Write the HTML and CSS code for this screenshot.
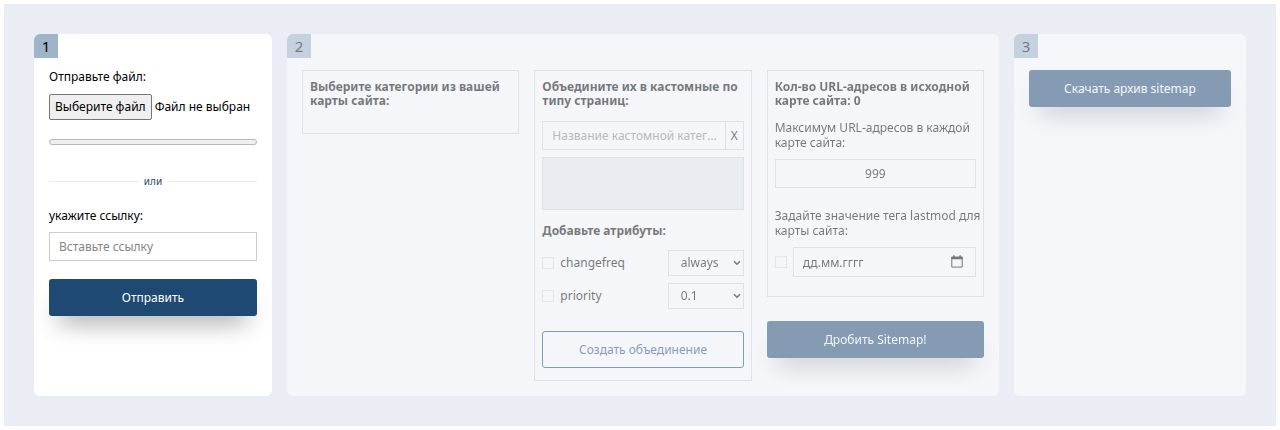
FILE: index.html
```html
<!DOCTYPE html>
<html lang="ru">
  <head>
    <meta charset="UTF-8" />
    <meta name="viewport" content="width=device-width, initial-scale=1.0" />
    <title>Sitemap</title>
    <link rel="stylesheet" href="styles.css">
  </head>
  <body>
    <main class="steps">
      <section class="step">
        <span class="step-number">1</span>
        <form>
          <p class="label">Отправьте файл:</p>
          <div class="file">
            <input class="file-input" type="file" id="file" />
            <label class="file-button" for="file">Выберите файл</label>
            <span>Файл не выбран</span>
          </div>
          <div class="progress" role="progressbar" aria-label="Загрузка файла"></div>
          <div class="or">или</div>
          <label class="label" for="link">укажите ссылку:</label>
          <input class="input" type="text" id="link" placeholder="Вставьте ссылку" />
          <button class="btn" type="button">Отправить</button>
        </form>
      </section>

      <section class="step disabled">
        <span class="step-number">2</span>
        <div class="columns">
          <div class="box box-categories">
            <h2>Выберите категории из вашей карты сайта:</h2>
          </div>

          <div class="box">
            <h2>Объедините их в кастомные по типу страниц:</h2>
            <div class="category">
              <input class="input" type="text" aria-label="Название категории" placeholder="Название кастомной категории" />
              <button class="category-remove" type="button">X</button>
            </div>
            <div class="drop"></div>
            <h2 class="attr-title">Добавьте атрибуты:</h2>
            <div class="attr">
              <input class="check" type="checkbox" id="changefreq" />
              <label for="changefreq">changefreq</label>
              <div class="select">
                <select aria-label="Значение changefreq">
                  <option>always</option>
                  <option>hourly</option>
                  <option>daily</option>
                </select>
                <svg viewBox="0 0 8 6"><path d="M1 1.2l3 3 3-3" /></svg>
              </div>
            </div>
            <div class="attr">
              <input class="check" type="checkbox" id="priority" />
              <label for="priority">priority</label>
              <div class="select">
                <select aria-label="Значение priority">
                  <option>0.1</option>
                  <option>0.2</option>
                  <option>0.3</option>
                </select>
                <svg viewBox="0 0 8 6"><path d="M1 1.2l3 3 3-3" /></svg>
              </div>
            </div>
            <button class="btn btn-outline" type="button">Создать объединение</button>
          </div>

          <div>
            <div class="box box-split">
              <h2>Кол-во URL-адресов в исходной карте сайта: 0</h2>
              <label class="text" for="max">Максимум URL-адресов в каждой карте сайта:</label>
              <input class="input input-center" type="text" id="max" value="999" />
              <label class="text text-date" for="date">Задайте значение тега lastmod для<br />карты сайта:</label>
              <div class="date">
                <input class="check" type="checkbox" aria-label="Добавить lastmod" />
                <div class="date-field">
                  <input class="input" type="text" id="date" placeholder="дд.мм.гггг" />
                  <svg viewBox="0 0 12 13">
                    <path class="line" d="M.8 2.2h10.4v9.9H.8z" />
                    <path d="M.3 1.7h11.4v2.6H.3zM2.2.2h1.4v2H2.2zM8.4.2h1.4v2H8.4z" />
                  </svg>
                </div>
              </div>
            </div>
            <button class="btn" type="button">Дробить Sitemap!</button>
          </div>
        </div>
      </section>

      <section class="step disabled">
        <span class="step-number">3</span>
        <button class="btn btn-first" type="button">Скачать архив sitemap</button>
      </section>
    </main>
  </body>
</html>
```

FILE: styles.css
```css
* {
  box-sizing: border-box;
}
body {
  margin: 4px;
  background-color: #fff;
  color: #000;
  font-family: "Noto Sans", "Open Sans", sans-serif;
  font-size: 12px;
  line-height: 14px;
}
h2,
p {
  margin: 0;
  font-size: 12px;
}
input,
select,
button {
  font: inherit;
  color: inherit;
}

.steps {
  display: grid;
  grid-template-columns: 238fr 712fr 232fr;
  gap: 15px;
  padding: 30px;
  background-color: #eaeef4;
}
.step {
  position: relative;
  min-width: 0;
  padding: 36px 15px 15px;
  background-color: #fff;
  border-radius: 6px;
}
.disabled {
  opacity: 0.5;
}
.step-number {
  position: absolute;
  top: 0;
  left: 0;
  width: 24px;
  height: 24px;
  border-top-left-radius: 6px;
  background-color: #a0b4c9;
  font-size: 15px;
  line-height: 24px;
  text-align: center;
}

.label {
  display: block;
}
.file {
  position: relative;
  display: flex;
  align-items: center;
  gap: 3px;
  margin-top: 10px;
  white-space: nowrap;
}
.file-input {
  position: absolute;
  width: 1px;
  height: 1px;
  opacity: 0;
}
.file-button {
  padding: 5px;
  border: 1px solid #767676;
  border-radius: 2px;
  background-color: #efefef;
}
.progress {
  height: 6px;
  margin-top: 19px;
  border: 1px solid #b8b8b8;
  border-radius: 3px;
  background-color: #efefef;
}
.or {
  display: flex;
  align-items: center;
  gap: 5px;
  margin: 29px 0 21px;
  color: #1e4973;
  font-size: 10px;
}
.or::before,
.or::after {
  content: "";
  flex: 1;
  height: 1px;
  background-color: #eaeef4;
}

.input {
  display: block;
  width: 100%;
  min-width: 0;
  height: 29px;
  padding: 0 9px;
  border: 1px solid #ccc;
  border-radius: 0;
  background-color: transparent;
  text-overflow: ellipsis;
}
.input::placeholder {
  color: #858585;
  opacity: 1;
}
.label + .input {
  margin-top: 9px;
}
.input-center {
  text-align: center;
}

.btn {
  display: block;
  width: 100%;
  height: 37px;
  margin-top: 18px;
  border: none;
  border-radius: 3px;
  background-color: #1e4973;
  box-shadow: 0 16px 24px -10px rgba(0, 0, 0, 0.4);
  color: #fff;
}
.btn-first {
  margin-top: 0;
}
.btn-outline {
  margin-top: 22px;
  border: 1px solid #1e4973;
  background-color: transparent;
  box-shadow: none;
  color: #1e4973;
}

.columns {
  display: grid;
  grid-template-columns: repeat(3, minmax(0, 1fr));
  align-items: start;
  gap: 15px;
}
.box {
  padding: 9px 7px 12px;
  border: 1px solid #ccc;
}
.box-categories {
  padding-bottom: 25px;
}
.box-split {
  padding-bottom: 19px;
}
.box-split + .btn {
  margin-top: 24px;
}

.category {
  display: flex;
  margin-top: 13px;
}
.category .input {
  padding-right: 3px;
}
.category-remove {
  flex: none;
  width: 18px;
  padding: 0;
  border: 1px solid #ccc;
  border-left: none;
  background-color: transparent;
}
.drop {
  height: 53px;
  margin-top: 7px;
  border: 1px solid #ccc;
  background-color: #e8ecf1;
}
.attr-title {
  margin: 14px 0 12px;
}
.attr {
  display: flex;
  align-items: center;
  gap: 6px;
}
.attr + .attr {
  margin-top: 7px;
}
.check {
  appearance: none;
  flex: none;
  width: 12px;
  height: 12px;
  margin: 0;
  border: 1px solid #d8dde6;
  background-color: #fff;
}
.check:checked {
  background-color: #1e4973;
}
.select {
  position: relative;
  width: 76px;
  margin-left: auto;
}
.select select {
  appearance: none;
  display: block;
  width: 100%;
  height: 26px;
  padding: 0 18px 0 12px;
  border: 1px solid #ccc;
  border-radius: 0;
  background-color: transparent;
}
.select svg {
  position: absolute;
  top: 10px;
  right: 3px;
  width: 8px;
  height: 6px;
  fill: none;
  stroke: #000;
  stroke-width: 1.5;
  pointer-events: none;
}

.text {
  display: block;
  margin: 12px 0 9px;
  line-height: 15px;
}
.text-date {
  margin-top: 20px;
  white-space: nowrap;
}
.date {
  display: flex;
  align-items: center;
  gap: 6px;
}
.date-field {
  position: relative;
  flex: 1;
}
.date-field .input {
  height: 30px;
}
.date-field .input::placeholder {
  color: #000;
}
.date-field svg {
  position: absolute;
  top: 8px;
  right: 13px;
  width: 12px;
  height: 13px;
}
.date-field .line {
  fill: none;
  stroke: #000;
}

/* borders are lighter inside step 2 */
.box,
.box .input,
.box select,
.category-remove,
.drop {
  border-color: #d2d4d6;
}
```
